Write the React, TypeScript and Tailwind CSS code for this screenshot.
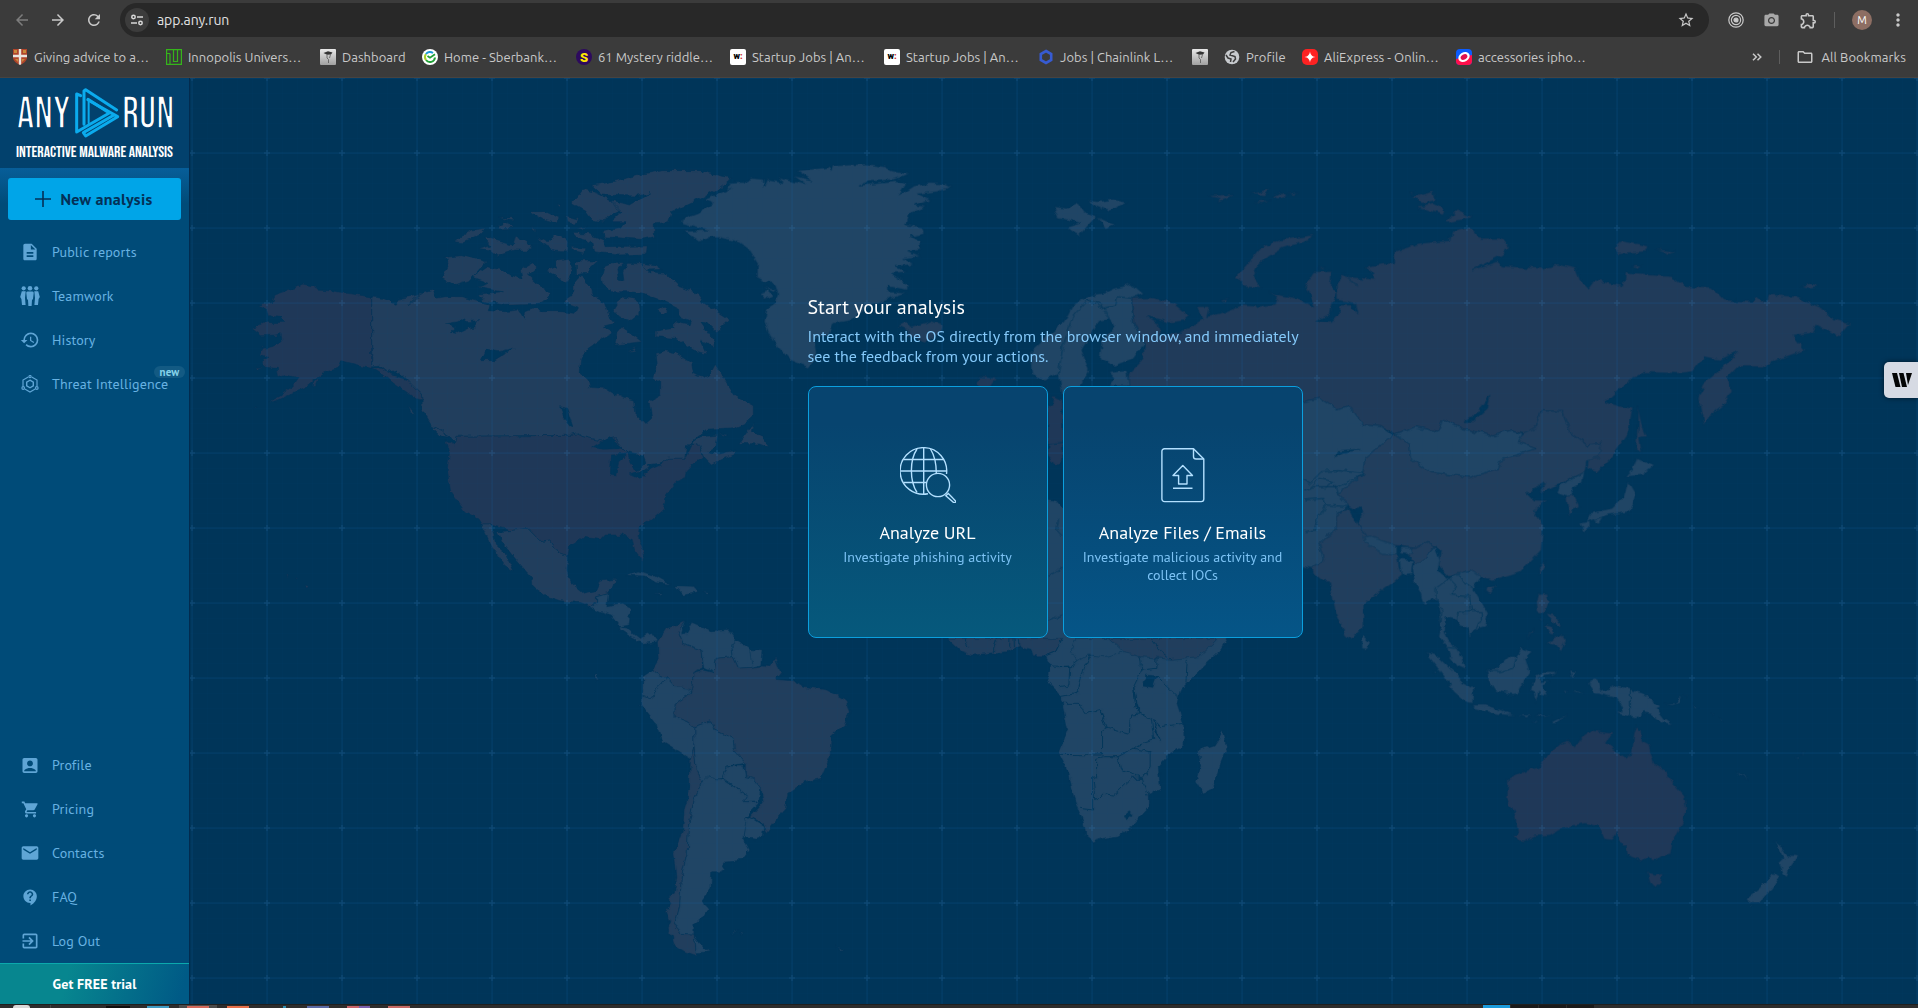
import React from 'react';
import {
  MdAccountBox,
  MdArrowBack,
  MdArrowForward,
  MdContactSupport,
  MdDescription,
  MdExitToApp,
  MdHistory,
  MdMail,
  MdMoreVert,
  MdRefresh,
  MdShoppingCart,
  MdOutlineFolder,
  MdPhotoCamera,
  MdStarBorder,
  MdOutlineExtension,
} from 'react-icons/md';

/* ---------- browser chrome ---------- */

const CapIcon = () => (
  <svg width="16" height="16" viewBox="0 0 16 16">
    <defs>
      <linearGradient id="cap" x1="0" y1="0" x2="0" y2="1">
        <stop offset="0" stopColor="#e8e8e8" />
        <stop offset="1" stopColor="#a0a0a0" />
      </linearGradient>
    </defs>
    <rect width="16" height="16" rx="1" fill="url(#cap)" />
    <path d="M3.500 4 8 2.200l4.500 1.300-1.500 2-4 .3z" fill="#333" />
    <path d="M7 6v3l1.500 1.500V14M10.500 5.500 9.500 9" stroke="#555" strokeWidth=".8" fill="none" />
  </svg>
);

const ShieldIcon = () => (
  <svg width="16" height="16" viewBox="0 0 16 16">
    <path d="M1 0h14v8c0 4-3 6-7 8-4-2-7-4-7-8z" fill="#b0452a" />
    <path d="M2 1h3v3H2zM11 1h3v3h-3zM3 10h3v3zM10 10h3l-3 3z" fill="#c98a3c" />
    <path d="M6.800 0h2.400v5.800H15v2.400H9.200V15.300L8 16l-1.200-.7V8.200H1V5.800h5.800z" fill="#eae6df" />
  </svg>
);

const GridIcon = () => (
  <svg width="16" height="16" viewBox="0 0 16 16" fill="none" stroke="#35b51b" strokeWidth="1.200">
    <path d="M.6.6h14.800v14.800H.6zM4 15V4.500M.6 4.500H4M7.500.6V12.500h4V.6M11.500 12.500V.6" />
  </svg>
);

const SberIcon = () => (
  <svg width="16" height="16" viewBox="0 0 16 16">
    <circle cx="8" cy="8" r="8" fill="#fff" />
    <path d="M13 8.500a5 5 0 0 1-9 2.500" stroke="#21a038" strokeWidth="2" fill="none" />
    <path d="M4 11a5 5 0 0 1 0-6" stroke="#a7d129" strokeWidth="2" fill="none" />
    <path d="M4 5a5 5 0 0 1 7-1" stroke="#1a9bd7" strokeWidth="2" fill="none" />
    <path d="M5.500 7 8 8.700 13 5.300" stroke="#21a038" strokeWidth="1.800" fill="none" />
  </svg>
);

const SIcon = () => (
  <span className="flex size-4 items-center justify-center rounded-full bg-[#2d0a5e] font-['Roboto',sans-serif] text-[13px] font-black leading-none text-[#ffe600]">
    S
  </span>
);

const WIcon = () => (
  <span className="flex size-4 items-center justify-center rounded-[2px] bg-white pb-px font-['Roboto',sans-serif] text-[9px] font-black leading-none text-black">
    w<span className="text-[#d8232a]">:</span>
  </span>
);

const HexIcon = () => (
  <svg width="16" height="16" viewBox="0 0 16 16" fill="none" stroke="#375bd2" strokeWidth="2.600">
    <path d="M8 2 13.200 5v6L8 14 2.800 11V5z" />
  </svg>
);

const GlobeIcon = () => (
  <svg width="16" height="16" viewBox="0 0 16 16">
    <circle cx="8" cy="8" r="7.300" fill="#c7cace" />
    <path d="M10.500 2.500 7 3.500 6 6l5 1.500.5 2.500L9 13M2 6l2 3 3 1-.5 3" stroke="#3b3b3b" strokeWidth="1.500" fill="none" />
  </svg>
);

const AliIcon = () => (
  <svg width="16" height="16" viewBox="0 0 16 16">
    <rect width="16" height="16" rx="5" fill="#fd2222" />
    <path d="M8 2.500c.6 3.500 2 4.900 5.500 5.500-3.500.6-4.900 2-5.500 5.500C7.400 10 6 8.600 2.500 8 6 7.400 7.400 6 8 2.500z" fill="#fff" />
  </svg>
);

const RingIcon = () => (
  <svg width="16" height="16" viewBox="0 0 16 16">
    <rect width="16" height="16" rx="4" fill="#0b5cff" />
    <path d="M0 10 16 6v6a4 4 0 0 1-4 4H4a4 4 0 0 1-4-4z" fill="#ff0f4b" />
    <ellipse cx="8" cy="8" rx="6" ry="4.600" transform="rotate(-30 8 8)" fill="#fff" />
    <ellipse cx="8" cy="8" rx="3.600" ry="2.500" transform="rotate(-30 8 8)" fill="#e0104f" />
  </svg>
);

function Bookmark({ icon, label, width }: { icon: React.ReactNode; label?: string; width: string }) {
  return (
    <div className={`flex shrink-0 items-center gap-[6px] ${width}`}>
      {icon}
      {label && <span className="whitespace-nowrap pt-px tracking-[0.030px]">{label}</span>}
    </div>
  );
}

function BrowserChrome() {
  return (
    <header className="flex h-[78px] flex-col border-b border-[#474340] bg-[#3b3b3b] font-['Ubuntu','Open_Sans',sans-serif] text-[#c9c9c9]">
      <div className="flex h-[37px] items-end">
        <div className="flex h-[34px] w-[120px] items-center gap-[18px] pl-[13px]">
          <MdArrowBack className="size-[18px] shrink-0 text-[#7d7d7d]" />
          <MdArrowForward className="size-[18px] shrink-0" />
          <MdRefresh className="size-[18px] shrink-0" />
        </div>
        <div className="flex h-[34px] w-[1589px] items-center rounded-full bg-[#282828] pl-[5px] pr-[14px]">
          <span className="flex size-6 items-center justify-center rounded-full bg-[#3c3c3c]">
            <svg width="14" height="14" viewBox="0 0 14 14" fill="none" stroke="#d8d8d8" strokeWidth="1.500">
              <circle cx="3.500" cy="4" r="1.700" />
              <path d="M7 4h6M1 10h6" />
              <circle cx="10.500" cy="10" r="1.700" />
            </svg>
          </span>
          <span className="ml-2 flex-1 text-[14px] tracking-[-0.1px] text-[#e3e3e3]">app.any.run</span>
          <MdStarBorder className="size-[18px]" />
        </div>
        <div className="flex h-[34px] flex-1 items-center pl-[19px]">
          <svg width="16" height="16" viewBox="0 0 16 16" fill="none" stroke="#c9c9c9" strokeWidth="1.200">
            <circle cx="8" cy="8" r="7.200" />
            <circle cx="8" cy="8" r="4.600" />
            <circle cx="8" cy="8" r="2" fill="#c9c9c9" />
          </svg>
          <MdPhotoCamera className="ml-[19px] size-[17px] text-[#a8a8a8]" />
          <MdOutlineExtension className="ml-[19px] size-[19px]" />
          <span className="ml-[16px] h-4 w-px bg-[#5e5e5e]" />
          <span className="ml-[17px] flex size-5 items-center justify-center rounded-full bg-[#8d6e63] text-[11px] text-white">M</span>
          <MdMoreVert className="ml-[16px] size-5" />
        </div>
      </div>
      <div className="flex h-10 items-center pl-3 pr-[12px] text-[13px]">
        <Bookmark icon={<ShieldIcon />} label="Giving advice to a…" width="w-[154px]" />
        <Bookmark icon={<GridIcon />} label="Innopolis Univers…" width="w-[154px]" />
        <Bookmark icon={<CapIcon />} label="Dashboard" width="w-[102px]" />
        <Bookmark icon={<SberIcon />} label="Home - Sberbank…" width="w-[154px]" />
        <Bookmark icon={<SIcon />} label="61 Mystery riddle…" width="w-[154px]" />
        <Bookmark icon={<WIcon />} label="Startup Jobs | An…" width="w-[154px]" />
        <Bookmark icon={<WIcon />} label="Startup Jobs | An…" width="w-[154px]" />
        <Bookmark icon={<HexIcon />} label="Jobs | Chainlink L…" width="w-[154px]" />
        <Bookmark icon={<CapIcon />} width="w-[32px]" />
        <Bookmark icon={<GlobeIcon />} label="Profile" width="w-[78px]" />
        <Bookmark icon={<AliIcon />} label="AliExpress - Onlin…" width="w-[154px]" />
        <Bookmark icon={<RingIcon />} label="accessories ipho…" width="w-[154px]" />
        <div className="ml-auto flex items-center">
          <svg width="10" height="8" viewBox="0 0 10 8" fill="none" stroke="#c9c9c9" strokeWidth="1.500">
            <path d="M1 .7 4.300 4 1 7.300M5.500.7 8.800 4 5.500 7.300" />
          </svg>
          <span className="ml-[17px] h-[14px] w-px bg-[#5e5e5e]" />
          <MdOutlineFolder className="ml-[16px] size-[18px]" />
          <span className="ml-[7px] whitespace-nowrap pt-px tracking-[0.100px]">All Bookmarks</span>
        </div>
      </div>
    </header>
  );
}

/* ---------- sidebar ---------- */

function Logo() {
  return (
    <div className="h-[90px] shrink-0 bg-[#02416d]">
      <svg width="189" height="90" viewBox="0 6 567 270" className="font-['Bebas_Neue','Roboto',sans-serif]">
        <g fontSize="133" fontWeight="300" fill="#fff" stroke="#02416d" strokeWidth="5">
          <text x="50" y="157" textLength="161" lengthAdjust="spacingAndGlyphs">
            ANY
          </text>
          <text x="366" y="157" textLength="157" lengthAdjust="spacingAndGlyphs">
            RUN
          </text>
        </g>
        <g fill="none" stroke="#0babed" strokeWidth="9" strokeLinecap="round" strokeLinejoin="round">
          <path d="M242 59 230 54V168L328 111 264 70" />
          <path d="M350 102 257 41 252 45V145" />
          <path d="M264 72 353 122 257 180 250 170 342 117" />
          <path d="M266 78V142" strokeWidth="6" />
        </g>
        <text x="48" y="243" fontSize="48" fontWeight="600" textLength="471" lengthAdjust="spacingAndGlyphs" fill="#fff">
          INTERACTIVE MALWARE ANALYSIS
        </text>
      </svg>
    </div>
  );
}

const TeamIcon = () => (
  <svg width="20" height="20" viewBox="0 0 20 20" fill="currentColor">
    <circle cx="3.700" cy="2.300" r="2.100" />
    <circle cx="10" cy="2.300" r="2.300" />
    <circle cx="16.300" cy="2.300" r="2.100" />
    <path d="M1.800 5.300h3.900L5 12l.6 7H2l-.6-6L.2 11zM18.200 5.300h-3.900l.7 6.700-.6 7H18l.6-6 1.200-2zM7.500 5.500h5c.9 0 1.200.8 1.200 1.500L13 13l-1 1-.4 6H8.400L8 14l-1-1-.7-6c0-.7.3-1.500 1.200-1.500z" />
  </svg>
);

const ThreatIcon = () => (
  <svg width="18" height="18" viewBox="0 0 18 18" fill="none" stroke="currentColor" strokeWidth="1.200">
    <path d="M7.300 1.900 2 5v6.500M10.700 1.900 16 5v6.500M3.800 14 9 17l5.200-3" />
    <path d="M9 5.200 12.300 7.100v3.800L9 12.800l-3.300-1.900V7.100z" strokeWidth="1.400" />
    <circle cx="9" cy="1.600" r="1.100" />
    <circle cx="2.200" cy="13" r="1.300" />
    <circle cx="15.800" cy="13" r="1.300" />
  </svg>
);

function NavItem({ icon, label, badge }: { icon: React.ReactNode; label: string; badge?: string }) {
  return (
    <a className="relative flex h-11 shrink-0 items-center gap-[12px] pl-5 text-[14px] tracking-[0.140px] text-[#68b2e2]">
      <span className="flex size-5 items-center justify-center text-[#5fa5d5]">{icon}</span>
      <span>{label}</span>
      {badge && (
        <span className="absolute left-[154px] top-[4px] flex h-3 w-[31px] items-center justify-center rounded-full bg-[#135a83] text-[11px] font-bold leading-none text-[#86d3e9]">
          {badge}
        </span>
      )}
    </a>
  );
}

function Sidebar() {
  return (
    <aside className="flex w-[190px] shrink-0 flex-col border-r border-[#032b4e] bg-[#004b78]">
      <Logo />
      <div className="flex flex-1 flex-col bg-[linear-gradient(#075e99,#004b78_36px)]">
        <button className="mx-2 mt-[10px] flex h-[42px] items-center justify-center gap-[9px] rounded-[3px] bg-[#00a5e8] pr-px text-[16px] font-bold tracking-[0.300px] text-[#043056]">
          <svg width="16" height="16" viewBox="0 0 16 16" stroke="currentColor" strokeWidth="1.600">
            <path d="M8 0v16M0 8h16" />
          </svg>
          New analysis
        </button>
        <nav className="mt-[10px] flex flex-col">
          <NavItem icon={<MdDescription className="size-[20px]" />} label="Public reports" />
          <NavItem icon={<TeamIcon />} label="Teamwork" />
          <NavItem icon={<MdHistory className="size-[20px]" />} label="History" />
          <NavItem icon={<ThreatIcon />} label="Threat Intelligence" badge="new" />
        </nav>
        <nav className="mt-auto flex flex-col">
          <NavItem icon={<MdAccountBox className="size-[21px]" />} label="Profile" />
          <NavItem icon={<MdShoppingCart className="size-[19px]" />} label="Pricing" />
          <NavItem icon={<MdMail className="size-[20px]" />} label="Contacts" />
          <NavItem icon={<MdContactSupport className="size-[19px]" />} label="FAQ" />
          <NavItem icon={<MdExitToApp className="size-[20px]" />} label="Log Out" />
        </nav>
      </div>
      <div className="flex h-[41px] shrink-0 items-center justify-center border-t border-[#0ba9ad] bg-[linear-gradient(105deg,#07868f_35%,#005a86_95%)] text-[14px] font-bold tracking-[0.100px] text-white">
        Get FREE trial
      </div>
    </aside>
  );
}

/* ---------- world map ---------- */

const C = { dark: '#1f3858', russia: '#203b5a', mid: '#213e5d', light: '#204565', water: '#003559' };

type Shape = [string, string];

const northAmerica: Shape[] = [
  [C.dark, 'M369 441 340 436 300 430 260 423 215 420 212 411 175 402 160 412 125 424 95 435 88 458 52 466 78 480 82 498 112 502 124 517 90 518 66 516 60 525 34 536 60 557 100 555 115 550 118 575 90 590 65 595 55 612 75 622 62 640 75 652 104 655 108 680 130 672 165 682 148 708 110 738 76 758 100 752 150 728 190 708 215 685 235 668 275 655 285 632 330 645 369 652Z'],
  [C.dark, 'M369 650 395 652 425 675 470 690 508 732 510 750 490 745 465 725 430 700 400 672ZM198 708 222 685 215 705ZM40 652 60 652 50 660ZM38 776 46 770 44 777Z'],
  [C.mid, 'M369 441 400 445 437 463 450 445 500 435 540 420 550 445 575 440 620 440 660 453 700 462 695 482 740 485 780 480 795 505 800 485 830 473 850 485 900 485 935 490 945 470 905 455 935 435 935 400 955 375 985 420 990 440 1020 455 1035 500 1050 520 1015 530 1045 548 1010 570 975 595 955 625 950 665 975 690 980 712 1020 715 1050 735 1105 750 1108 790 1135 822 1153 805 1145 755 1178 735 1178 700 1158 685 1168 640 1165 610 1190 602 1220 608 1250 630 1265 640 1270 670 1297 685 1315 675 1330 645 1368 710 1385 738 1440 770 1440 795 1415 820 1385 833 1310 838 1250 892 1245 925 1198 925 1165 945 1120 965 1105 960 1085 905 1045 860 1010 873 960 860 945 852 930 856 605 859 600 880 570 845 535 825 510 780 510 750 508 732 487 710 460 680 435 660 415 668 390 645 369 648Z'],
  [C.mid, 'M1250 892 1290 860 1335 856 1330 890 1310 905 1340 912 1388 900 1385 912 1320 945 1310 935 1298 922 1290 888 1265 885ZM1440 815 1432 845 1465 860 1480 893 1455 882 1400 880 1420 850ZM532 828 565 840 585 865 560 858ZM472 770 490 795 478 790ZM1335 845 1365 855 1360 858Z'],
  [C.mid, 'M1012 380 1020 350 1050 337 1075 338 1055 360 1060 390 1075 395 1072 360 1085 340 1125 342 1145 365 1190 370 1230 410 1280 430 1300 460 1372 510 1335 545 1310 520 1290 515 1330 575 1330 590 1290 570 1308 612 1270 600 1220 565 1165 560 1165 543 1215 535 1215 515 1260 525 1265 510 1230 500 1228 475 1180 450 1130 430 1090 425 1040 425 1015 400ZM1125 340 1165 345 1182 358 1140 360Z'],
  [C.mid, 'M985 105 1040 95 1130 72 1180 62 1290 62 1375 85 1340 115 1270 155 1210 185 1200 215 1160 222 1160 260 1120 268 1020 260 1015 245 1065 235 1080 215 1040 215 1070 185 1050 170 1040 150 1090 165 1148 128 1110 138 1015 135ZM930 160 960 115 1000 130 1040 150 1068 180 1035 195 1020 215 985 210 965 180ZM930 250 975 252 1020 270 1025 290 1140 288 1138 312 1060 315 990 305 985 275 940 262ZM930 292 968 295 965 312 935 305ZM832 258 860 275 885 255 918 272 915 303 880 300 850 285ZM670 295 700 285 685 262 730 275 765 285 772 258 815 285 812 300 770 300 720 318 700 300ZM600 275 650 240 687 235 670 255 625 278ZM720 205 768 203 765 212ZM722 228 750 218 760 235 725 237ZM818 182 850 182 893 205 890 222 855 212 820 192ZM912 197 948 208 940 222 915 218ZM940 235 970 230 960 238ZM888 160 900 162 895 167ZM812 228 830 240 825 243Z'],
  [C.mid, 'M575 322 620 317 690 335 660 370 640 392 600 405 565 382 582 350ZM650 380 690 350 730 358 750 372 790 388 785 360 820 338 828 355 805 375 830 400 872 432 865 445 835 460 740 463 680 450 670 432 735 425 665 412 700 400ZM858 362 890 350 880 335 920 328 932 365 920 390 900 397 885 378ZM942 333 1002 333 965 370 942 375ZM1068 440 1115 450 1118 490 1090 512 1060 500 1045 480ZM1070 530 1125 575 1050 585 1055 550ZM1168 483 1183 471 1198 483 1183 496ZM1088 605 1110 592 1105 602ZM472 462 515 432 490 445Z'],
  [C.dark, 'M605 859 930 856 945 852 960 860 1010 873 1045 860 1085 905 1105 960 1120 965 1165 945 1198 925 1245 925 1262 887 1288 885 1298 922 1270 940 1250 960 1245 985 1220 995 1195 1030 1185 1078 1150 1110 1118 1135 1115 1160 1133 1215 1127 1232 1105 1200 1098 1165 1070 1155 1020 1155 1010 1168 960 1162 920 1190 915 1220 895 1212 870 1170 850 1172 842 1175 805 1135 760 1142 700 1125 677 1125 665 1105 630 1085 590 1025 580 960 587 905 578 872 600 885ZM180 1305 190 1307 193 1316 183 1316ZM132 1276 138 1275 137 1280ZM153 1286 159 1287 156 1290Z'],
  [C.mid, 'M720 1145 760 1142 805 1135 842 1175 870 1170 895 1212 917 1220 913 1260 924 1295 946 1315 965 1332 996 1325 1011 1290 1050 1285 1043 1315 1031 1328 998 1338 998 1358 981 1370 952 1358 896 1352 850 1335 820 1310 818 1285 770 1225 735 1180ZM677 1125 700 1125 710 1150 715 1180 740 1205 765 1262 740 1245 705 1190Z'],
  [C.water, 'M575 522 610 515 625 503 635 515 667 512 655 530 615 550 592 545 605 530ZM675 632 690 598 725 605 765 595 710 632ZM898 770 915 775 932 830 920 825 905 800ZM985 893 1035 860 1075 895 1020 898ZM1040 915 1085 912 1060 935 1052 978 1037 975ZM1085 905 1130 915 1138 935 1110 965 1092 935ZM1090 975 1150 955 1120 985ZM1140 945 1185 938 1150 955ZM1250 890 1310 838 1340 836 1285 858Z'],
];

const southAndAfrica: Shape[] = [
  [C.light, 'M108 98 82 108 82 128 68 140 90 155 115 165 135 200 155 195 158 145 140 132 105 140ZM133 200 150 205 178 235 205 220 218 245 185 250 155 228 135 210ZM148 45 175 33 210 45 248 73 215 68 190 48ZM260 80 300 82 307 95 275 103ZM212 98 227 99 225 104ZM320 97 335 98 330 103Z'],
  [C.mid, 'M218 245 238 205 262 195 280 183 265 215 275 250 315 268 320 325 298 338 295 400 258 380 240 355 205 332 220 300Z'],
  [C.light, 'M280 183 265 215 275 250 315 268 322 325 345 338 350 295 388 290 385 255 395 240 378 208 340 212 295 187 290 200 282 220 272 222Z'],
  [C.light, 'M395 240 420 260 425 268 455 272 452 315 430 322 400 325 388 290 385 255ZM425 268 430 322'],
  [C.light, 'M205 332 240 355 215 385 205 415 185 405 185 350Z'],
  [C.light, 'M185 405 205 415 215 385 240 355 258 380 290 385 295 400 258 430 258 470 285 485 300 500 300 560 292 598 228 545 215 490 180 430Z'],
  [C.mid, 'M320 330 345 338 350 295 388 290 400 325 430 322 455 318 470 320 482 292 495 340 485 358 520 362 550 380 600 390 640 420 648 455 640 490 615 520 607 530 605 590 585 655 545 668 510 700 505 745 480 785 462 818 455 790 425 770 455 725 450 685 432 655 415 650 415 610 390 570 388 535 345 510 338 483 300 500 285 485 258 470 258 430 295 400 298 338Z'],
  [C.light, 'M300 500 338 483 345 510 388 535 390 570 415 610 375 618 365 655 318 665 305 630 300 560Z'],
  [C.light, 'M375 618 412 618 415 650 432 655 450 685 445 725 408 728 418 705 365 655Z'],
  [C.light, 'M425 770 458 800 455 830 440 838 410 832 415 775Z'],
  [C.mid, 'M292 598 300 560 305 630 318 665 300 720 288 800 285 880 272 950 268 1040 258 1090 270 1120 300 1122 305 1175 310 1188 280 1175 255 1155 252 1130 240 1110 248 1085 238 1055 248 1030 240 1015 256 1000 262 950 255 880 275 810 278 750 290 690Z'],
  [C.light, 'M318 665 330 652 365 658 418 705 408 728 448 728 418 770 410 832 425 870 410 898 370 903 362 935 340 935 338 985 318 1020 332 1045 318 1075 300 1095 300 1122 270 1120 258 1090 268 1040 272 950 285 880 288 800 300 720ZM302 1130 320 1160 335 1175 305 1178ZM385 1122 397 1110 393 1118ZM400 1124 414 1114 408 1122ZM617 1162 635 1172 632 1177ZM78 350 82 346 85 356 80 361Z'],
  [C.light, 'M868 235 900 275 922 286 960 280 1000 275 1030 258 1055 268 1060 287 1088 287 1100 318 1090 362 1118 400 1125 430 1137 510 1117 580 1140 640 1150 710 1175 800 1178 830 1192 845 1215 835 1250 828 1280 800 1318 745 1318 700 1345 685 1340 620 1360 590 1398 555 1397 490 1382 430 1390 390 1440 320 1480 270 1495 235 1495 -150 1130 -150 1112 -178 1093 -182 868 -180ZM1485 513 1495 560 1480 610 1462 690 1440 700 1425 665 1435 620 1430 570 1465 555Z'],
  [C.mid, 'M868 235 900 275 922 286 960 280 1000 275 1030 258 1055 268 1060 287 1088 287 1110 275 1125 235ZM1210 235 1262 278 1300 290 1370 298 1430 290 1470 240 1470 235Z'],
  [C.light, 'M1145 270 1155 235 1230 235 1262 275 1220 290 1185 285 1160 305Z'],
  [C.water, 'M1312 345 1337 348 1328 382 1307 378ZM1285 380 1290 430 1300 462 1290 440ZM1330 478 1345 545 1335 520ZM1264 765 1275 752 1284 764 1270 780Z'],
];

const africaBorders = [
  'M1160 305 1145 320 1100 318M1188 285 1175 320 1158 400 1120 410M1115 320 1142 318 1140 375 1120 380M1300 290 1303 330 1285 380 1290 440 1300 462 1278 465 1275 520 1220 500 1210 448 1175 460 1165 430 1125 430',
  'M1210 448 1225 500 1213 525 1213 585 1118 583M1215 590 1202 595 1202 650 1193 652 1193 750 1165 745M1215 590 1250 590 1285 565 1322 575 1322 620 1305 655 1280 655 1240 705 1215 700 1200 722 1197 660M1305 655 1315 710M1250 590 1255 625 1300 655',
  'M1325 478 1300 460M1325 478 1330 540 1295 555 1285 565M1330 478 1345 500 1397 490M1337 348 1385 410M1303 330 1337 325 1337 290M1405 300 1402 370M1325 235 1340 265 1370 298M905 235 915 262M970 275 978 235M1007 260 1008 235M1018 260 1017 235M1028 257 1026 235M1088 287 1110 275 1125 235',
];

const asia: Shape[] = [
  [C.russia, 'M-138 415-102 413-58 430-26 465-33 482-66 488-117 468-91 490-87 525-50 520-20 500 5 478-5 440 20 440 15 470 45 460 90 435 125 440 165 432 170 410 150 397 185 408 215 415 248 442 240 410 230 380 250 335 288 335 285 375 300 400 290 430 285 460 255 485 285 487 305 460 305 435 330 435 345 462 340 430 300 420 300 370 313 340 345 378 320 350 383 358 365 318 425 308 425 275 480 250 545 242 550 215 590 203 610 235 660 235 675 260 660 285 595 330 650 305 660 318 750 325 780 312 820 325 830 360 848 385 862 360 925 378 930 340 985 345 1030 350 1060 380 1120 385 1145 420 1205 425 1215 408 1235 430 1240 403 1300 410 1360 445 1380 475 1420 490 1395 530 1345 495 1335 520 1295 525 1322 570 1270 595 1230 620 1175 620 1150 655 1162 690 1145 735 1110 770 1100 795 1088 715 1100 670 1140 625 1175 575 1135 600 1100 590 1075 635 1045 640 970 637 940 660 885 725 920 740 945 745 935 820 900 890 870 935 845 925 848 900 878 850 845 855 810 820 790 755 745 752 735 800 715 820 680 810 640 828 570 805 530 778 520 815 470 800 428 825 395 800 358 795 325 737 300 750 262 715 225 725 100 800-137 800-160 690-155 640-125 600-121 550-145 490-150 415Z'],
  [C.russia, 'M248 225 240 240 180 265 150 290 125 320 115 350 135 385 95 380 90 362 75 355 100 320 130 265 175 240ZM465 110 510 95 515 120 485 130ZM475 140 510 128 537 150 530 165ZM535 190 560 150 593 172ZM905 262 920 243 980 258 975 275 915 280ZM995 268 1040 275 1025 282ZM940 315 965 315 957 324ZM1315 378 1335 370 1352 378 1330 384ZM18 108 55 104 75 103 62 114 40 125 42 115ZM108 102 130 96 152 86 140 106ZM120 124 154 121 135 130ZM158 110 175 97 188 108 172 116ZM190 102 215 96 205 105ZM45 422 60 418 55 430ZM258 322 275 320 270 325ZM455 96 467 97 460 100Z'],
  [C.russia, 'M955 740 962 790 975 832 960 835 965 880 952 870 955 800Z'],
  [C.mid, 'M428 825 455 850 460 895 505 937 590 952 650 925 655 900 735 865 695 845 705 820 735 800 745 752 790 755 810 820 845 855 878 850 870 890 845 900 840 935 780 975 750 998 740 992 755 968 715 1000 730 1020 758 1022 728 1050 750 1100 745 1170 700 1235 640 1260 610 1250 590 1232 545 1250 520 1215 525 1170 500 1145 470 1165 440 1160 410 1160 365 1130 345 1095 355 1055 325 1040 300 1000 355 945 360 895 385 865 420 825Z'],
  [C.light, 'M428 825 470 800 520 815 530 778 570 805 640 828 680 810 705 820 695 845 735 865 655 900 650 925 590 952 505 937 460 895 455 850Z'],
  [C.light, 'M150 725 225 725 262 715 300 750 325 737 358 795 395 800 420 825 385 865 360 895 355 945 300 1000 325 1040 300 1060 300 1100 260 1150 270 1200 245 1225 150 1200Z'],
  [C.mid, 'M300 1060 325 1045 345 1095 365 1130 410 1160 430 1185 435 1220 440 1245 420 1270 358 1330 356 1400 330 1440 317 1425 295 1350 283 1265 270 1265 248 1240 245 1225 270 1200 260 1150 300 1100ZM440 1165 470 1165 500 1145 512 1160 490 1200 470 1225 465 1200Z'],
  [C.light, 'M435 1195 465 1200 462 1240 440 1245ZM358 1130 372 1128 430 1160 430 1182 400 1180 362 1150ZM438 1163 462 1163 465 1180 440 1178Z'],
  [C.light, 'M955 893 992 915 965 945 930 950 945 925ZM935 965 950 1000 938 1055 890 1065 845 1085 850 1060 900 1045 925 1010ZM830 1090 850 1085 852 1100 840 1115ZM860 1078 880 1070 870 1090Z'],
  [C.light, 'M840 935 835 965 810 985 815 1005 800 1010 780 1000 785 975Z'],
  [C.mid, 'M815 1005 828 1040 805 1065 800 1010Z'],
  [C.water, 'M577 785 605 760 633 708 628 745 595 785ZM295 893 300 872 350 868 310 878ZM338 1050 350 1043 358 1055 348 1072Z'],
];

const centralAsiaBorders =
  'M225 958 240 970 265 935 300 932 355 940M228 990 250 980 300 980 355 945M240 985 260 955 290 965 270 985M228 1020 270 1015 275 1035 325 1040M275 1035 255 1080 250 1110 228 1115M300 1000 295 975';

const oceania: Shape[] = [
  [C.light, 'M342-40 355 0 350 30 378 55 345 85 345 115 360 150 358 200 350 130 335 110 322 132 310 125 305 95 290 65 285 20 320-10Z'],
  [C.light, 'M378 55 400 40 435 30 460 50 440 85 460 125 477 160 470 200 445 208 430 230 425 205 405 195 400 178 370 170 365 215 375 240 395 262 410 290 420 330 400 320 380 290 372 260 352 230 358 200 360 150 345 115 345 85Z'],
  [C.light, 'M158 222 178 245 170 268 157 265ZM320 277 345 285 385 330 410 352 410 368 440 385 438 430 420 425 390 395 365 345ZM438 435 470 435 505 448 545 467 500 462 445 445ZM555 465 585 466 575 473ZM597 467 642 465 610 472ZM640 485 680 463 650 488ZM588 482 607 488 600 490ZM473 330 500 325 530 290 548 290 562 262 588 278 572 295 582 335 568 360 555 400 540 403 495 392 478 360ZM600 345 620 335 655 335 640 343 605 352 610 365 635 362 615 378 627 408 612 405 605 390 600 428 595 395 585 390ZM685 330 698 335 690 355ZM670 395 680 396 675 401ZM692 394 705 391 722 400ZM340 332 348 340 344 342Z'],
  [C.light, 'M727 368 745 357 760 368 765 395 800 375 838 388 870 400 895 420 915 440 905 445 925 475 945 493 915 487 890 462 870 458 852 476 835 470 803 460 820 450 805 415 770 405 748 400 740 380ZM925 430 950 430 970 410 965 425 945 435ZM998 430 1012 443 1005 442ZM1040 458 1052 465 1048 466ZM1065 470 1072 482 1068 480ZM975 405 980 412 976 410Z'],
  [C.mid, 'M475 82 495 78 485 100 472 95ZM605 25 620 3 620 20 608 45ZM605 100 625 100 628 125 618 160 603 155 600 130ZM625 160 645 165 662 195 655 198 640 185ZM622 195 640 200 642 225 632 220ZM625 250 665 222 675 240 662 275 650 255ZM573 235 593 203 590 215ZM606 172 616 180 612 182Z'],
  [C.dark, 'M855 498 865 515 868 545 885 555 898 610 928 632 945 665 975 705 980 745 970 790 945 845 940 885 918 888 898 905 882 890 868 903 828 885 825 855 808 845 805 815 790 840 775 838 760 800 725 790 665 803 635 825 595 828 570 843 552 842 542 828 552 815 545 765 525 715 528 655 565 635 605 622 630 580 660 550 680 542 700 560 715 530 740 510 790 520 775 550 828 595 842 575 848 515ZM880 937 900 943 920 938 915 965 900 983 888 968Z'],
  [C.light, 'M1205 845 1220 860 1235 885 1265 888 1245 920 1235 948 1226 940 1215 910 1228 895ZM1200 937 1215 950 1200 985 1180 1005 1165 1030 1145 1030 1132 1018 1165 985ZM1106 632 1120 642 1137 658 1120 648ZM1258 598 1266 594 1266 600ZM1272 582 1284 576 1278 582ZM1142 1037 1148 1037 1145 1041Z'],
];

const oceaniaBorders =
  'M838 388V472M475 332 510 335 540 325 550 295M378 55 395 75 385 105 430 110 435 155 460 155M400 178 400 158 435 155M398 42 415 65 440 85M445 208 460 180 460 155M372 262 395 265';

const greenland: Shape[] = [
  [C.light, 'M81 145 11 180 35 190-3 220-54 242-45 250 20 270-40 275-3 305 30 293 55 293 105 308 125 325 150 370 150 415 165 425 195 430 203 460 195 490 175 505 168 545 180 580 195 610 235 660 285 683 305 650 300 600 340 580 350 550 400 540 440 500 490 480 538 460 490 455 490 440 545 450 545 435 500 400 540 395 510 380 558 372 530 355 575 350 540 335 575 330 575 305 550 290 585 282 582 265 540 255 548 220 590 200 560 195 600 178 570 162 620 155 657 142 640 132 600 130 560 138 520 168 540 130 510 125 415 136 440 125 510 118 545 103 500 92 480 80 435 72 350 78 345 92 335 82 255 92 290 120 245 108 275 132 225 120 205 110 215 128 178 120 168 142 165 118 135 115 110 128 80 130 68 150ZM155 462 180 452 190 470 170 480ZM165 440 200 450 195 456Z'],
  [C.mid, 'M518 558 540 545 550 560 585 550 605 543 635 555 632 575 590 605 540 590 548 572Z'],
  [C.light, 'M925 200 960 205 990 190 1005 215 1035 230 990 288 960 262 995 250 965 240 935 235ZM1040 232 1085 255 1060 268ZM1010 180 1040 185 1080 178 1115 188 1070 212 1030 195Z'],
];

const europe: Shape[] = [
  [C.light, 'M705 285 700 215 745 170 795 125 820 75 870 45 905 40 935 25 985 12 1018 42 985 55 985 80 990 130 1020 190 990 235 935 258 895 235 900 185 935 140 925 115 890 125 870 165 845 210 865 270 845 310 820 340 790 345 780 280 735 300Z'],
  [C.light, 'M920 278 970 272 978 318 920 318 935 295Z'],
  [C.dark, 'M550 310 560 290 605 295 585 325 560 325ZM750 375 760 378 765 350 792 365 792 540 775 560 750 525Z'],
];

const europeBorders =
  'M780 280 785 240 795 190 820 110 860 60 905 85 940 75 945 50 985 55M860 60 895 70 905 85 925 115M750 495 792 490M750 890 792 865M780 720 775 750 792 770M750 1020 792 1005';

function Land({ shapes, transform, lines }: { shapes: Shape[]; transform: string; lines?: string }) {
  return (
    <g transform={transform}>
      {shapes.map(([fill, d]) => (
        <path key={d} d={d} fill={fill} stroke={C.water} strokeWidth="0.500" vectorEffect="non-scaling-stroke" />
      ))}
      {lines && <path d={lines} fill="none" stroke={C.water} strokeWidth="0.900" vectorEffect="non-scaling-stroke" />}
    </g>
  );
}

function WorldMap() {
  return (
    <svg className="absolute inset-0" width="1728" height="926" viewBox="190 78 1728 926">
      <defs>
        <filter id="coast" x="0" y="0" width="1" height="1" colorInterpolationFilters="sRGB">
          <feTurbulence type="fractalNoise" baseFrequency="0.140" numOctaves="2" seed="4" result="n" />
          <feDisplacementMap in="SourceGraphic" in2="n" scale="6" xChannelSelector="R" yChannelSelector="G" />
        </filter>
        <pattern id="minor" x="192" y="78" width="15" height="15" patternUnits="userSpaceOnUse">
          <path d="M.5 0V15M0 .5H15" stroke="#0a5aa8" strokeOpacity="0.030" />
        </pattern>
        <pattern id="major" x="154" y="115" width="75" height="75" patternUnits="userSpaceOnUse">
          <path d="M38 0V75M0 38H75" stroke="#1468b8" strokeOpacity="0.095" strokeWidth="2" />
          <path d="M38 35v6M35 38h6" stroke="#4a9ad8" strokeOpacity="0.130" strokeWidth="1.500" />
        </pattern>
      </defs>
      <g filter="url(#coast)">
        <Land shapes={northAmerica} transform="translate(240 150) scale(.35714 .33333)" />
        <Land shapes={southAndAfrica} transform="translate(560 560) scale(.44643 .33333)" lines={africaBorders.join('')} />
        <Land shapes={asia} transform="translate(1200 160) scale(.45792 .33333)" lines={centralAsiaBorders} />
        <Land shapes={oceania} transform="translate(1300 560) scale(.39414 .33333)" lines={oceaniaBorders} />
        <Land shapes={greenland} transform="translate(700 140) scale(.38265 .33333)" />
        <Land shapes={europe} transform="translate(780 280) scale(.35714 .33333)" lines={europeBorders} />
      </g>
      <rect x="190" y="78" width="1728" height="926" fill="url(#minor)" />
      <rect x="190" y="78" width="1728" height="926" fill="url(#major)" />
    </svg>
  );
}

/* ---------- main panel ---------- */

const UrlIcon = () => (
  <svg width="56" height="56" viewBox="0 0 56 56" fill="none" stroke="#b3e0ff" strokeWidth="1.400">
    <path d="M46.500 27A23.300 23.300 0 1 0 28 46.800" />
    <path d="M23.700.6V47M17 2C9.500 13 9.500 34 17 45.500M30.500 2c3.700 6 5.800 14 5.800 24M3.500 12.500h40.500M.5 24h46.500M3.500 35.500h23" />
    <circle cx="38" cy="38" r="11.600" />
    <path d="m45.800 48.700 2.500-2.300 7 7.300a1.200 1.200 0 0 1-.1 1.700 1.200 1.200 0 0 1-1.900-.1z" />
  </svg>
);

const FileIcon = () => (
  <svg width="44" height="56" viewBox="0 0 44 56" fill="none" stroke="#b3e0ff" strokeWidth="1.400" strokeLinejoin="round">
    <path d="M3.500 1.700H32.500L42.800 12V52a2.600 2.600 0 0 1-2.600 2.600H3.500A2.600 2.600 0 0 1 .9 52V4.300a2.600 2.600 0 0 1 2.600-2.600z" />
    <path d="M32.500 1.700V9.400A2.600 2.600 0 0 0 35.100 12h7.700" />
    <path d="M21.800 18.500 31.500 28.500H26V37h-8.400V28.500H12zM12 41.300h19.500" />
  </svg>
);

function Card({ tone, icon, title, text }: { tone: string; icon: React.ReactNode; title: string; text: string }) {
  return (
    <div className={`flex h-[252px] w-[240px] flex-col items-center rounded-lg border border-[#0b9fde] px-4 pt-[60px] text-center ${tone}`}>
      {icon}
      <h2 className="mt-[19px] text-[18px] leading-[22px] text-white">{title}</h2>
      <p className="mt-[4px] text-[14px] leading-[18px] text-[#7cc2f4]">{text}</p>
    </div>
  );
}

function Main() {
  return (
    <main className="relative flex-1 overflow-hidden bg-[#003559]">
      <WorldMap />
      <section className="relative ml-[617.5px] flex w-[495px] flex-col pt-[217px]">
        <h1 className="text-[20px] leading-6 text-white">Start your analysis</h1>
        <p className="mt-[7px] whitespace-nowrap text-[16px] leading-5 tracking-[-0.010px] text-[#84c9fa]">
          Interact with the OS directly from the browser window, and immediately
          <br />
          see the feedback from your actions.
        </p>
        <div className="mt-5 flex gap-[15px]">
          <Card tone="bg-[linear-gradient(#07446f,#07446f_15%,#06597c)]" icon={<UrlIcon />} title="Analyze URL" text="Investigate phishing activity" />
          <Card tone="bg-[linear-gradient(#07446f,#07446f_15%,#055587)]" icon={<FileIcon />} title="Analyze Files / Emails" text="Investigate malicious activity and collect IOCs" />
        </div>
      </section>
      <div className="absolute right-0 top-[284px] flex h-9 w-[34px] items-center rounded-l-[5px] bg-[#d6dae3] pl-2 shadow-[0_0_5px_rgba(0,0,0,0.6)]">
        <svg width="20" height="14" viewBox="0 0 20 14" fill="#050505">
          <path d="M0 0h5l3.500 14h-5zM7 0h4.500L15 14h-5zM14 0h6l-4 12z" />
        </svg>
      </div>
    </main>
  );
}

function Taskbar() {
  return (
    <footer className="flex h-1 items-start overflow-hidden border-t border-[#1f1f1f] bg-[#2d2d2d]">
      <span className="ml-[13px] h-[3px] w-[17px] rounded-t-full bg-[#d9d9d9]" />
      <span className="ml-[20px] h-[3px] w-px bg-[#444]" />
      <span className="ml-[55px] mt-px h-[2px] w-[24px] bg-[#0f0f0f]" />
      <span className="ml-[17px] mt-px h-[2px] w-[22px] bg-[#3d9bc4]" />
      <span className="ml-[10px] flex h-[3px] w-[38px] justify-center bg-[#4b4b4b] pt-px">
        <span className="h-[2px] w-[22px] bg-[#d46a5c]" />
      </span>
      <span className="ml-[10px] mt-px h-[2px] w-[22px] bg-[#e8704a]" />
      <span className="ml-[34px] mt-px h-[2px] w-[3px] bg-[#2f8cae]" />
      <span className="ml-[21px] mt-px h-[2px] w-[22px] bg-[#5a6aa6]" />
      <span className="ml-[18px] mt-px h-[2px] w-[12px] bg-[#c9646b]" />
      <span className="mt-px h-[2px] w-[11px] bg-[#7b5fae]" />
      <span className="ml-[18px] mt-px h-[2px] w-[22px] bg-[#c76a66]" />
      <span className="ml-auto mr-[324px] flex gap-px">
        <span className="h-[3px] w-[27px] bg-[#1b9bdc]" />
        <span className="h-[3px] w-[27px] bg-[#1a1a1a]" />
        <span className="h-[3px] w-[27px] bg-[#1a1a1a]" />
        <span className="h-[3px] w-[27px] bg-[#1a1a1a]" />
      </span>
    </footer>
  );
}

export default function App() {
  return (
    <div className="flex h-[1008px] w-[1918px] flex-col overflow-hidden bg-[#003559] font-['PT_Sans','Noto_Sans',sans-serif]">
      <BrowserChrome />
      <div className="flex min-h-0 flex-1">
        <Sidebar />
        <Main />
      </div>
      <Taskbar />
    </div>
  );
}
